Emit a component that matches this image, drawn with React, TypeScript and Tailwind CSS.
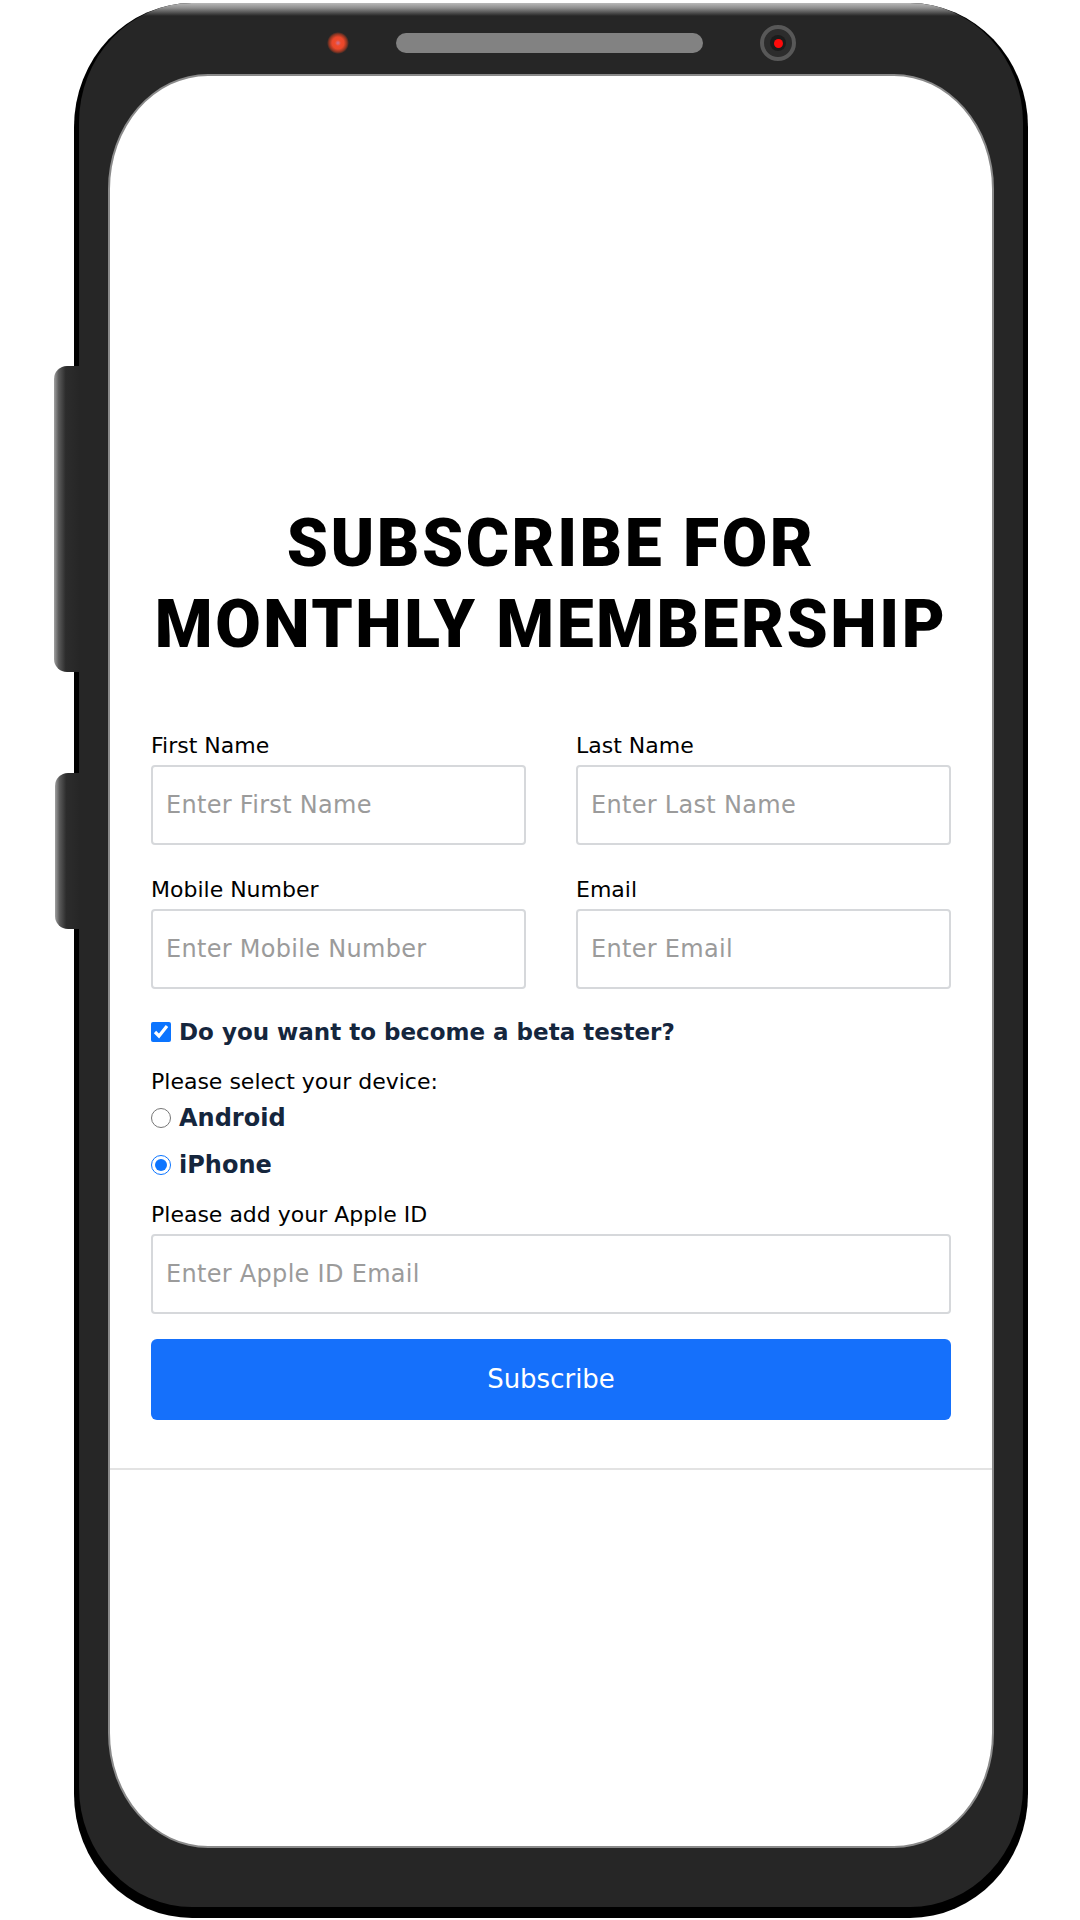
import { useState } from "react";

function TextField({ label, placeholder }: { label: string; placeholder: string }) {
  return (
    <div className="flex flex-col">
      <label className="mb-[7px] text-[22px] leading-[24px] text-black">{label}</label>
      <input
        type="text"
        placeholder={placeholder}
        className="h-[80px] w-full rounded-[4px] border-2 border-[#d6d8db] bg-white px-[13px] text-[24px] tracking-[0.3px] text-black outline-none placeholder:text-[#9b9b9b]"
      />
    </div>
  );
}

function PhoneFrame({ children }: { children: React.ReactNode }) {
  return (
    <div className="relative h-[1915px] w-[954px] rounded-[118px/124px] bg-black px-[5px] pb-[11px]">
      {/* side buttons */}
      <div className="absolute left-[-20px] top-[363px] h-[306px] w-[26px] rounded-l-[13px] bg-[linear-gradient(to_right,#a0a0a0,#5a5a5a_18%,#2c2c2c_45%,#262626)]" />
      <div className="absolute left-[-19px] top-[770px] h-[156px] w-[25px] rounded-l-[13px] bg-[linear-gradient(to_right,#a0a0a0,#5a5a5a_18%,#2c2c2c_45%,#262626)]" />

      <div className="relative flex h-full flex-col rounded-[113px/120px] bg-[linear-gradient(to_bottom,#b8b8b8_0px,#8e8e8e_5px,#262626_13px)] px-[29px] pb-[59px]">
        {/* top bezel */}
        <div className="flex h-[71px] shrink-0 items-center pl-[219px] pt-[9px]">
          <div className="h-[22px] w-[22px] rounded-full bg-[radial-gradient(circle,#c9749a_0px,#f04a2b_3px,#ea472a_6px,#8a3522_9px,#262626_11px)]" />
          <div className="ml-[47px] h-[20px] w-[307px] rounded-full bg-[#828282]" />
          <div className="ml-[57px] flex h-[36px] w-[36px] items-center justify-center rounded-full border-[4px] border-[#585858] bg-[#2c2c2c]">
            <div className="flex h-[16px] w-[16px] items-center justify-center rounded-full bg-[#1c1c1c]">
              <div className="h-[9px] w-[9px] rounded-full bg-[#ff0a0a]" />
            </div>
          </div>
        </div>

        <div className="flex-1 overflow-hidden rounded-[100px/115px] border-2 border-[#8a8a8a] bg-white">
          {children}
        </div>
      </div>
    </div>
  );
}

export default function App() {
  const [beta, setBeta] = useState(true);
  const [device, setDevice] = useState("iphone");

  return (
    <div className="h-[1920px] w-[1080px] overflow-hidden bg-white pl-[74px] pt-[3px] font-['DejaVu_Sans',sans-serif]">
      <PhoneFrame>
        <div className="flex flex-col pt-[427px]">
          <div className="px-[41px]">
            <h1 className="text-center font-['Roboto',sans-serif] text-[66px] leading-[81px] font-black tracking-[2.5px] text-black">
              SUBSCRIBE FOR
              <br />
              MONTHLY MEMBERSHIP
            </h1>

            <form className="mt-[69px] flex flex-col" onSubmit={(e) => e.preventDefault()}>
              <div className="grid grid-cols-2 gap-x-[50px] gap-y-[33px]">
                <TextField label="First Name" placeholder="Enter First Name" />
                <TextField label="Last Name" placeholder="Enter Last Name" />
                <TextField label="Mobile Number" placeholder="Enter Mobile Number" />
                <TextField label="Email" placeholder="Enter Email" />
              </div>

              <label className="mt-[29px] flex h-[28px] items-center gap-[8px]">
                <input
                  type="checkbox"
                  checked={beta}
                  onChange={(e) => setBeta(e.target.checked)}
                  className="m-0 h-[20px] w-[20px] accent-[#0b74ff]"
                />
                <span className="text-[23px] leading-[28px] font-bold text-[#15263d]">
                  Do you want to become a beta tester?
                </span>
              </label>

              <div className="mt-[24px] text-[22px] leading-[24px] text-black">Please select your device:</div>

              <label className="mt-[8px] flex h-[32px] items-center gap-[8px]">
                <input
                  type="radio"
                  name="device"
                  checked={device === "android"}
                  onChange={() => setDevice("android")}
                  className="m-0 h-[20px] w-[20px] accent-[#0b74ff]"
                />
                <span className="text-[24px] leading-[32px] font-bold text-[#15263d]">Android</span>
              </label>

              <label className="mt-[15px] flex h-[32px] items-center gap-[8px]">
                <input
                  type="radio"
                  name="device"
                  checked={device === "iphone"}
                  onChange={() => setDevice("iphone")}
                  className="m-0 h-[20px] w-[20px] accent-[#0b74ff]"
                />
                <span className="text-[24px] leading-[32px] font-bold text-[#15263d]">iPhone</span>
              </label>

              <div className="mt-[22px]">
                <TextField label="Please add your Apple ID" placeholder="Enter Apple ID Email" />
              </div>

              <button
                type="submit"
                className="mt-[25px] h-[81px] w-full rounded-[6px] bg-[#1570fb] text-[26px] text-white"
              >
                Subscribe
              </button>
            </form>
          </div>

          <div className="mt-[48px] border-t-2 border-[#e3e3e3]" />
        </div>
      </PhoneFrame>
    </div>
  );
}
